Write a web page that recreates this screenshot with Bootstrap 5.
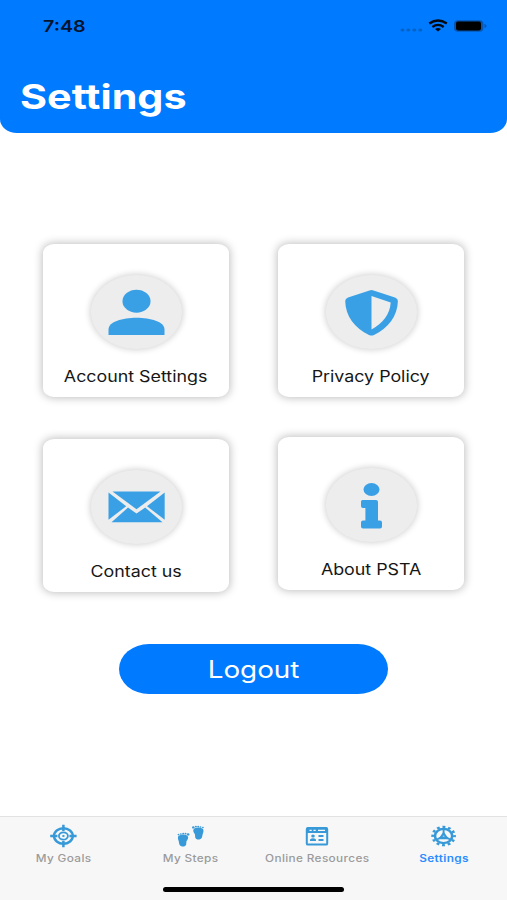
<!DOCTYPE html>
<html lang="en">
<head>
<meta charset="utf-8">
<meta name="viewport" content="width=device-width, initial-scale=1">
<title>Settings</title>
<link href="https://cdn.jsdelivr.net/npm/bootstrap@5.3.0/dist/css/bootstrap.min.css" rel="stylesheet">
<style>
  body { font-family: Inter, "Liberation Sans", sans-serif; color: #161616; background: #fff; }
  .screen { height: 900px; overflow: hidden; }
  .wide { display: inline-block; transform: scaleX(1.2); white-space: nowrap; }
  .top-bar { height: 133px; background: #007aff; border-radius: 0 0 17px 17px / 0 0 14px 14px; }
  .status { height: 52px; padding: 0 20px 0 42.5px; color: #04142e; }
  .clock { font-size: 16px; font-weight: 600; transform: scaleX(1.23); transform-origin: left; line-height: 52px; }
  .page-title { font-size: 34px; font-weight: 700; line-height: 40px; margin: 25px 0 0 20.3px; transform: scaleX(1.215); transform-origin: left; }
  .tiles { padding: 111px 43px 0 43px; height: 510.5px; }
  .tile-col { width: 186px; gap: 42px; }
  .tile-col.tight { gap: 39.5px; }
  .tile { height: 153px; padding-top: 31px; border: 0; border-radius: 11px / 9px; box-shadow: 0 0 8px 1px rgba(0,0,0,.25); color: inherit; background: #fff; }
  .disc { width: 91px; height: 74px; border-radius: 50%; background: #ededed; box-shadow: 0 0 6px 1px rgba(0,0,0,.18); }
  .tile-label { font-size: 15.3px; line-height: 20px; margin-top: 18px; transform: scaleX(1.165); }
  .blue { fill: #3aa0e6; }
  .logout { width: 269px; height: 50px; border: 0; border-radius: 30px / 25px; background: #007aff; font-size: 24px; line-height: 51px; }
  .logout .wide { transform: scaleX(1.16); }
  .tab-bar { height: 84px; background: #f7f7f7; border-top: 1.5px solid #e2e2e2; }
  .tab { color: #9b9b9b; font-size: 10px; font-weight: 500; padding-top: 6px; }
  .tab.active { color: #2d8cff; font-weight: 600; }
  .tab-label { line-height: 12px; margin-top: 3px; letter-spacing: .3px; transform: scaleX(1.18); }
  .home { width: 181px; height: 5px; background: #000; margin-bottom: 8px; }
</style>
<script src="https://cdn.jsdelivr.net/npm/bootstrap@5.3.0/dist/js/bootstrap.bundle.min.js"></script>
</head>
<body>
<div class="screen d-flex flex-column">
  <header class="top-bar">
    <div class="status d-flex justify-content-between">
      <span class="clock wide">7:48</span>
      <svg width="88" height="52" viewBox="399 0 88 52" aria-hidden="true">
        <g fill="#0862c4"><ellipse cx="402.5" cy="30" rx="2" ry="1.6"/><ellipse cx="408.3" cy="30" rx="2" ry="1.6"/><ellipse cx="414.3" cy="30" rx="2" ry="1.6"/><ellipse cx="420.3" cy="30" rx="2" ry="1.6"/></g>
        <g fill="none" stroke="#020812" stroke-width="2.4"><path d="M429.3 23.6Q438 17.4 446.8 23.6"/><path d="M432.4 26.9Q438 22.9 443.7 26.9"/></g>
        <path d="M435 29Q438 27.1 441 29L438 31.5Z" fill="#020812"/>
        <rect x="454" y="20.2" width="29.4" height="11.6" rx="3.8" fill="#0757b2"/>
        <rect x="456" y="21.6" width="25" height="8.8" rx="1.8" fill="#000"/>
        <path d="M484.4 23.9Q486.6 24.4 486.6 26T484.4 28.1Z" fill="#0757b2"/>
      </svg>
    </div>
    <h1 class="page-title wide text-white">Settings</h1>
  </header>

  <main class="flex-grow-1">
    <div class="tiles d-flex justify-content-between">
      <div class="tile-col d-flex flex-column">
        <a class="tile card align-items-center text-decoration-none" href="#">
          <span class="disc"><svg width="91" height="74" viewBox="91 275 91 74"><g class="blue"><ellipse cx="136.5" cy="301.2" rx="14" ry="11.5"/><path d="M108.5 335V329.5C108.5 313.8 164.5 313.8 164.5 329.5V335Z"/></g></svg></span>
          <span class="tile-label wide">Account Settings</span>
        </a>
        <a class="tile card align-items-center text-decoration-none" href="#">
          <span class="disc"><svg width="91" height="74" viewBox="91 470 91 74"><g class="blue"><path d="M112.5 491.5H160.5L136.5 509.3Z"/><path d="M108.5 492.5L126.2 506.2L108.5 519.8Z"/><path d="M164.7 492.5L147 506.2L164.7 519.8Z"/><path d="M128 507.6L136.5 513.5L145.2 507.6L162.5 522.2H111.5Z"/></g></svg></span>
          <span class="tile-label wide">Contact us</span>
        </a>
      </div>
      <div class="tile-col tight d-flex flex-column">
        <a class="tile card align-items-center text-decoration-none" href="#">
          <span class="disc"><svg width="91" height="74" viewBox="326 275 91 74"><path class="blue" fill-rule="evenodd" d="M369.5 290.4Q371.5 289.6 373.5 290.4L395 297.6Q398 298.8 397.9 301C397.6 316 388 328.5 374 335Q371.5 336.2 369 335C355 328.5 345.4 316 345.2 301Q345.2 298.8 348 297.6ZM371.5 296V329.5C383 323.5 390 314 390.7 302.5Z"/></svg></span>
          <span class="tile-label wide">Privacy Policy</span>
        </a>
        <a class="tile card align-items-center text-decoration-none" href="#">
          <span class="disc"><svg width="91" height="74" viewBox="326 467.5 91 74"><g class="blue"><ellipse cx="371.5" cy="489" rx="8" ry="6.5"/><path d="M362.5 499.5H376Q378 499.5 378 501.5V520H380Q382 520 382 522V526Q382 528 380 528H363Q361 528 361 526V522Q361 520 363 520H365.4V507.5H362.8Q361 507.5 361 505.5V501.3Q361 499.5 362.5 499.5Z"/></g></svg></span>
          <span class="tile-label wide">About PSTA</span>
        </a>
      </div>
    </div>
    <div class="d-flex justify-content-center">
      <button class="logout btn btn-primary p-0" type="button"><span class="wide">Logout</span></button>
    </div>
  </main>

  <nav class="tab-bar d-flex flex-column align-items-center justify-content-between">
    <div class="d-flex w-100">
      <a class="tab col d-flex flex-column align-items-center text-decoration-none" href="#">
        <svg width="30" height="26" viewBox="-15.4 -13 30 26"><g fill="none" stroke="#3799d8"><ellipse rx="9.4" ry="7.8" stroke-width="2.4"/><ellipse rx="4.5" ry="3.7" stroke-width="1.8"/><path d="M0-11.3V-5M0 5V11.3M-13.2 0H-6M6 0H13.2" stroke-width="2.5"/></g><ellipse rx="1.3" ry="1" fill="#3799d8"/></svg>
        <span class="tab-label wide">My Goals</span>
      </a>
      <a class="tab col d-flex flex-column align-items-center text-decoration-none" href="#">
        <svg width="30" height="26" viewBox="-15.3 -13 30 26"><g fill="#3799d8"><path id="foot" d="M-12.1.2C-9.5-2.4-2.2-2.2-2.1 1.6C-2.1 3.9-4.3 4.7-4 6.9C-3.6 10.2-7 11-8.9 10.3C-11.7 9.2-10.9 6.6-11.9 4.3Q-12.8 2-12.1.2Z"/><g id="toes"><ellipse cx="-11.8" cy="-1.4" rx=".9" ry=".8"/><ellipse cx="-9.5" cy="-2" rx=".9" ry=".8"/><ellipse cx="-7.1" cy="-2.4" rx="1" ry=".8"/><ellipse cx="-4.8" cy="-2.4" rx="1" ry=".9"/><ellipse cx="-2.2" cy="-1.6" rx="1.3" ry="1.2"/></g><g transform="matrix(-1 0 0 1 .8 -7)"><use href="#foot"/><use href="#toes"/></g></g></svg>
        <span class="tab-label wide">My Steps</span>
      </a>
      <a class="tab col d-flex flex-column align-items-center text-decoration-none" href="#">
        <svg width="30" height="26" viewBox="-15 -13 30 26"><rect x="-10.2" y="-8" width="20.4" height="16.6" rx="1.2" fill="none" stroke="#3799d8" stroke-width="2"/><path d="M-10-8.5H10V-3H-10Z" fill="#3799d8"/><path d="M-7.5-5.7H-5.3M-3.5-5.7H-1.3M1-5.7H8" stroke="#f7f7f7" stroke-width="1.3"/><g fill="#3799d8"><ellipse cx="-4" cy="0" rx="1.8" ry="1.5"/><path d="M-7 5V3.5Q-4 1-1 3.5V5ZM1.5-.9H6.5V1.1H1.5ZM1.5 3H6.5V5H1.5Z"/></g></svg>
        <span class="tab-label wide">Online Resources</span>
      </a>
      <a class="tab active col d-flex flex-column align-items-center text-decoration-none" href="#">
        <svg width="30" height="26" viewBox="-14.6 -13 30 26"><g fill="none" stroke="#3799d8" transform="scale(1.2 1)"><circle r="7.2" stroke-width="2.2"/><circle r="9.1" stroke-width="2.3" stroke-dasharray="2.4 2.365" stroke-dashoffset="1.2"/><path d="M0-7V0M-6 3.8L0 0L6 3.8" stroke-width="1.6"/><path d="M0-4.6L4.4 3.2H-4.4Z" fill="#3799d8" stroke="none"/></g><ellipse cy=".3" rx="1" ry=".8" fill="#9fcdec"/></svg>
        <span class="tab-label wide">Settings</span>
      </a>
    </div>
    <div class="home rounded-pill"></div>
  </nav>
</div>
</body>
</html>
